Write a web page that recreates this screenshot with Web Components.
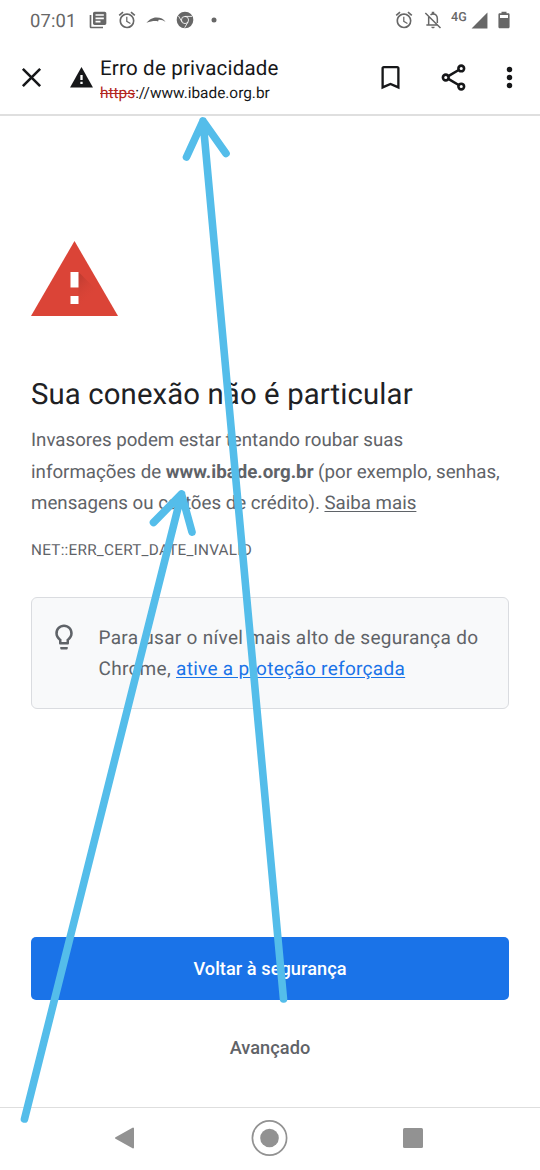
<!DOCTYPE html>
<html lang="pt-BR">
<head>
<meta charset="utf-8">
<title>Erro de privacidade</title>
<style>
html,body{margin:0;padding:0;background:#fff}
body{width:540px;height:1170px;overflow:hidden;font-family:Roboto,"Liberation Sans",sans-serif;text-rendering:geometricPrecision}
</style>
</head>
<body>
<phone-screen>
  <status-bar slot="status"></status-bar>
  <browser-toolbar slot="toolbar"><span slot="title">Erro de privacidade</span><span slot="scheme">https</span><span slot="host">://www.ibade.org.br</span></browser-toolbar>
  <privacy-warning slot="content"></privacy-warning>
  <system-nav slot="nav"></system-nav>
  <arrow-overlay slot="overlay"></arrow-overlay>
</phone-screen>
<script>
const ICONS = {
  articles: '<path d="M4 6H2v14c0 1.1.9 2 2 2h14v-2H4V6zm16-4H8c-1.1 0-2 .9-2 2v12c0 1.1.9 2 2 2h12c1.1 0 2-.9 2-2V4c0-1.1-.9-2-2-2zm-1 9H9V9h10v2zm-4 4H9v-2h6v2zm4-8H9V5h10v2z"/>',
  alarm: '<path d="M22 5.72l-4.6-3.86-1.29 1.53 4.6 3.86L22 5.72zM7.88 3.39L6.6 1.86 2 5.71l1.29 1.53 4.59-3.85zM12.5 8H11v6l4.75 2.85.75-1.23-4-2.37V8zM12 4c-4.97 0-9 4.03-9 9s4.02 9 9 9a9 9 0 0 0 0-18zm0 16c-3.87 0-7-3.13-7-7s3.13-7 7-7 7 3.13 7 7-3.13 7-7 7z"/>',
  swoosh: '<path d="M.5 15.200C4 12 7.200 9 12.5 9c5.200 0 8.800 1.400 11 5.500-2.800-2.400-5.300-3.100-8.300-2.900l-.7 2.200c-3.300-1.200-8-.4-14 1.400z"/>',
  chrome: '<circle cx="12" cy="12" r="10"/><circle cx="12" cy="12" r="4.300" fill="none" stroke="#fff" stroke-width="1"/><path d="M12 7.700h8.500M8.280 14.150 4.200 7.200M15.720 14.150 11.600 21.300" stroke="#fff" stroke-width="1"/>',
  bell: '<g fill="none" stroke="currentColor" stroke-width="1.800"><path d="M2.800 3.500 21 21.700M6.800 8.500v9.500M4 18h13M9 5.800C10 5 11 4.700 12 4.700c3.200 0 5.200 2.500 5.200 5.800v5"/></g><path d="M10.500 2h3v3h-3zM10 20h4c0 1.200-.8 2-2 2s-2-.8-2-2z"/>',
  signal: '<path d="M2 22h20V2z"/>',
  battery: '<path fill-rule="evenodd" d="M9 2h6v2h2.200c.8 0 1.500.7 1.500 1.500V20.500c0 .8-.7 1.500-1.500 1.500H6.800c-.8 0-1.500-.7-1.500-1.500V5.500C5.300 4.700 6 4 6.800 4H9zM7.200 6v3.600h9.600V6z"/>',
  close: '<path d="M3.700 3.700l16.600 16.600M20.300 3.700L3.700 20.300" stroke="currentColor" stroke-width="2.500"/>',
  warning: '<path d="M1 21.500h22L12 2z"/><path fill="#fff" d="M10.900 9.500h2.200v5h-2.200zm0 6.500h2.200v2.200h-2.200z"/>',
  bookmark: '<path d="M17.200 3H6.800C5.700 3 5 3.700 5 4.800V21l7-3 7 3V4.800C19 3.700 18.300 3 17.200 3zm0 15.200L12 16l-5.200 2.200V4.800h10.400z"/>',
  share: '<g fill="none" stroke="currentColor" stroke-width="2"><circle cx="18" cy="5" r="2.200"/><circle cx="6" cy="12" r="2.200"/><circle cx="18" cy="19" r="2.200"/><path d="M8 10.900 16 6.200M8 13.100l8 4.700"/></g>',
  more: '<circle cx="12" cy="4.300" r="2.600"/><circle cx="12" cy="12" r="2.600"/><circle cx="12" cy="19.700" r="2.600"/>',
  bulb: '<path d="M9 21c0 .55.450 1 1 1h4c.55 0 1-.45 1-1v-1H9v1zm3-19C8.140 2 5 5.140 5 9c0 2.380 1.190 4.470 3 5.740V17c0 .55.450 1 1 1h6c.55 0 1-.45 1-1v-2.260c1.810-1.270 3-3.360 3-5.740 0-3.860-3.140-7-7-7zm2.850 11.100l-.85.6V16h-4v-2.300l-.85-.6A5 5 0 1 1 14.850 13.100z"/>',
  dot: '<circle cx="12" cy="12" r="3"/>'
};
function element(name, markup) {
  customElements.define(name, class extends HTMLElement {
    constructor() {
      super();
      const t = document.createElement('template');
      t.innerHTML = markup;
      this.attachShadow({mode:'open'}).append(t.content.cloneNode(true));
    }
  });
}
customElements.define('ui-icon', class extends HTMLElement {
  connectedCallback() {
    if (this.shadowRoot) return;
    const s = this.getAttribute('size') || 20;
    this.attachShadow({mode:'open'}).innerHTML =
      `<style>:host{display:block;flex:none;width:${s}px;height:${s}px}svg{display:block;width:100%;height:100%;fill:currentColor;overflow:visible}</style><svg viewBox="0 0 24 24">${ICONS[this.getAttribute('name')]}</svg>`;
  }
});
element('phone-screen', `<style>
:host{display:flex;flex-direction:column;position:relative;width:540px;height:1170px;background:#fff}
main{flex:1;min-height:0;display:flex}
</style><slot name="status"></slot><slot name="toolbar"></slot><main><slot name="content"></slot></main><slot name="nav"></slot><slot name="overlay"></slot>`);
element('status-bar', `<style>
:host{display:flex;align-items:center;height:40px;padding:0 26px 0 30px;box-sizing:border-box;color:#676767}
.time{font-size:18.400px;line-height:40px;padding-top:3px;width:58px;letter-spacing:.15px}
.group{display:flex;align-items:center;gap:9px}
.right{margin-left:auto;gap:0}
.net{font-size:12.500px;font-weight:500;line-height:14px;margin:-4px 0 0 8px;width:19px;letter-spacing:.2px}
</style><span class="time">07:01</span>
<div class="group"><ui-icon name="articles"></ui-icon><ui-icon name="alarm"></ui-icon><ui-icon name="swoosh"></ui-icon><ui-icon name="chrome"></ui-icon><ui-icon name="dot"></ui-icon></div>
<div class="group right"><ui-icon name="alarm"></ui-icon><ui-icon name="bell" style="margin-left:9px"></ui-icon><span class="net">4G</span><ui-icon name="signal" size="19"></ui-icon><ui-icon name="battery" style="margin-left:5px"></ui-icon></div>`);
element('browser-toolbar', `<style>
:host{display:flex;align-items:center;height:76px;box-sizing:border-box;border-bottom:2px solid #dfdfdf;padding:0 18px 0 19px;color:#161719}
.address{margin-left:6px;margin-top:6px;display:flex;flex-direction:column}
.title{font-size:20.500px;line-height:26px;letter-spacing:.2px;white-space:nowrap}
.url{font-size:15.400px;line-height:22px;white-space:nowrap}
.scheme{color:#b3261e;text-decoration:line-through}
.actions{margin-left:auto;display:flex;align-items:center}
</style><ui-icon name="close" size="25"></ui-icon><ui-icon name="warning" size="25" style="margin-left:25px"></ui-icon>
<div class="address"><div class="title"><slot name="title"></slot></div><div class="url"><span class="scheme"><slot name="scheme"></slot></span><slot name="host"></slot></div></div>
<div class="actions"><ui-icon name="bookmark" size="31"></ui-icon><ui-icon name="share" size="31" style="margin-left:32px"></ui-icon><ui-icon name="more" size="25" style="margin-left:28px"></ui-icon></div>`);
element('danger-sign', `<style>:host{display:block;width:87px;height:75px}svg{display:block}</style>
<svg width="87" height="75" viewBox="0 0 87 75"><defs><linearGradient id="shade" gradientUnits="userSpaceOnUse" x1="43" y1="40" x2="60" y2="57"><stop offset="0" stop-color="#b93a2f" stop-opacity=".8"/><stop offset="1" stop-color="#db4437" stop-opacity="0"/></linearGradient></defs><path fill="#db4437" d="M43.500 0 87 75H0z"/><path fill="url(#shade)" d="M47.500 31 67 50.500V75H53.500l-14-12h8V46.500h-8z"/><path fill="#fff" d="M39.500 31h8v15.500h-8zM39.500 55h8v8h-8z"/></svg>`);
element('tip-card', `<style>
:host{display:flex;box-sizing:border-box;height:112px;border:1px solid #dadce0;border-radius:6px;background:#f8f9fa;padding:24px 24px 0 16.500px;color:#5f6368;font-size:19px;line-height:31.500px}
p{margin:0 0 0 20px;white-space:nowrap;letter-spacing:.3px}
</style><ui-icon name="bulb" size="30"></ui-icon><p><slot></slot></p>`);
element('action-button', `<style>
:host{display:block}
button{display:block;width:100%;height:63px;border:0;border-radius:5px;background:#1a73e8;color:#fff;font:500 18.200px/63px Roboto,"Liberation Sans",sans-serif;letter-spacing:.05px;padding:0}
:host([plain]) button{background:none;color:#5f6368}
</style><button><slot></slot></button>`);
element('privacy-warning', `<style>
:host{display:flex;flex-direction:column;width:100%;box-sizing:border-box;padding:125px 31px 0;color:#5f6368;font-size:19px;line-height:31.500px}
h1{margin:60px 0 0;font-size:29.300px;font-weight:400;line-height:38px;letter-spacing:.13px;color:#202124;white-space:nowrap}
.text{margin:11px 0 0;white-space:nowrap;font-size:18.720px}
.line{display:block}
u{text-underline-offset:2px}
.code{font-size:15.300px;line-height:20px;margin-top:20px;letter-spacing:.25px}
tip-card{margin-top:37px}
.blue{color:#1a73e8}
.main{margin-top:228px}
.extra{margin-top:16px}
</style><danger-sign></danger-sign>
<h1>Sua conexão não é particular</h1>
<p class="text"><span class="line l1">Invasores podem estar tentando roubar suas</span><span class="line l2">informações de <b>www.ibade.org.br</b> (por exemplo, senhas,</span><span class="line l3">mensagens ou cartões de crédito). <u>Saiba mais</u></span></p>
<div class="code">NET::ERR_CERT_DATE_INVALID</div>
<tip-card>Para usar o nível mais alto de segurança do<br>Chrome, <u class="blue">ative a proteção reforçada</u></tip-card>
<action-button class="main">Voltar à segurança</action-button>
<action-button class="extra" plain>Avançado</action-button>`);
element('system-nav', `<style>
:host{display:grid;grid-template-columns:20px 36px 20px;column-gap:116px;align-items:center;height:63px;box-sizing:border-box;border-top:1px solid #dedede;padding:0 0 2px 115px}
svg{display:block;overflow:visible}
</style><svg width="20" height="22" viewBox="0 0 20 22"><path d="M1 11 18 1.500v19z" fill="#929292" stroke="#929292" stroke-width="2" stroke-linejoin="round"/></svg>
<svg width="36" height="36" viewBox="0 0 36 36"><circle cx="18.500" cy="18" r="17.100" fill="none" stroke="#929292" stroke-width="1.700"/><circle cx="18.500" cy="18" r="9.300" fill="#929292"/></svg>
<svg width="20" height="20" viewBox="0 0 20 20"><rect width="20" height="20" rx="1.500" fill="#929292"/></svg>`);
element('arrow-overlay', `<style>:host{display:block;position:absolute;inset:0;pointer-events:none}svg{display:block}</style>
<svg width="540" height="1170" viewBox="0 0 540 1170" fill="none" stroke="#54bdea" stroke-width="7.600" stroke-linecap="round" stroke-linejoin="round"><path d="M283.500 999 203 121M186.500 157 203 121 226 153.500"/><path d="M24.500 1119 181.500 494M153.500 522.500 181.500 494 192 532"/></svg>`);
</script>
</body>
</html>
